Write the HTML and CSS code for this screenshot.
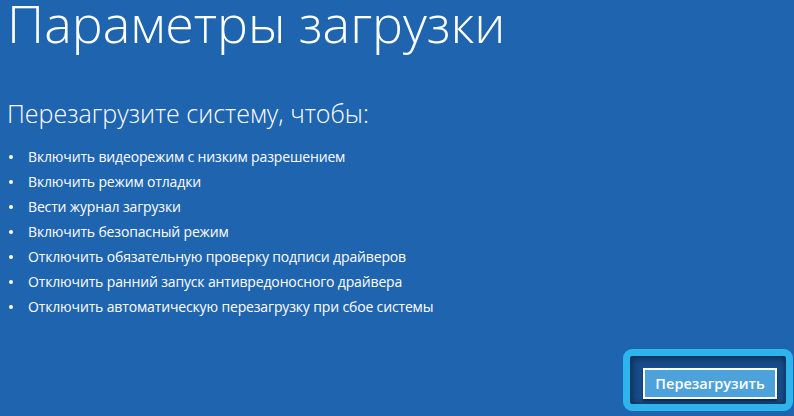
FILE: index.html
```html
<!DOCTYPE html>
<html lang="ru">
<head>
<meta charset="utf-8">
<title>Параметры загрузки</title>
<link rel="stylesheet" href="styles.css">
</head>
<body>
<div class="page">
  <h1 class="title">Параметры загрузки</h1>
  <h2 class="subtitle">Перезагрузите систему, чтобы:</h2>
  <ul class="options">
    <li>Включить видеорежим с низким разрешением</li>
    <li>Включить режим отладки</li>
    <li>Вести журнал загрузки</li>
    <li>Включить безопасный режим</li>
    <li>Отключить обязательную проверку подписи драйверов</li>
    <li>Отключить ранний запуск антивредоносного драйвера</li>
    <li>Отключить автоматическую перезагрузку при сбое системы</li>
  </ul>
  <div class="footer">
    <div class="focus-frame">
      <button class="restart">Перезагрузить</button>
    </div>
  </div>
</div>
</body>
</html>
```
FILE: styles.css
```css
html, body {
  margin: 0;
  padding: 0;
  background: #1f64af;
}
body {
  font-family: "Open Sans", "Noto Sans", sans-serif;
  color: #ffffff;
}
.page {
  box-sizing: border-box;
  height: 416px;
  padding: 0 1px 5px 7px;
  display: flex;
  flex-direction: column;
}
.title {
  margin: 0;
  font-weight: 300;
  font-size: 52px;
  line-height: 46px;
  white-space: nowrap;
}
.subtitle {
  margin: 53px 0 0 0;
  font-weight: 300;
  font-size: 25px;
  line-height: 28px;
  white-space: nowrap;
}
.options {
  list-style: none;
  margin: 17px 0 0 0;
  padding: 0;
  font-size: 14px;
  letter-spacing: -0.15px;
  font-weight: 400;
}
.options li {
  height: 25px;
  line-height: 25px;
  display: flex;
  align-items: center;
  white-space: nowrap;
}
.options li::before {
  content: "";
  width: 4px;
  height: 4px;
  background: #ffffff;
  border-radius: 50%;
  margin: 0 15px 0 2px;
  flex: none;
}
.footer {
  margin-top: auto;
  display: flex;
  justify-content: flex-end;
}
.focus-frame {
  box-sizing: border-box;
  width: 170px;
  height: 62px;
  border: 7px solid #2db4ec;
  border-radius: 9px;
  background: #174c8a;
  box-shadow: inset 3px 3px 6px rgba(0, 0, 0, 0.35), inset -2px -2px 4px rgba(0, 0, 0, 0.25);
  padding: 12px 8px 5px 13px;
  display: flex;
}
.restart {
  box-sizing: border-box;
  width: 134px;
  height: 31px;
  border: 2px solid #ffffff;
  background: #4ea2dc;
  color: #ffffff;
  font-family: "Open Sans", "Noto Sans", sans-serif;
  font-weight: 600;
  font-size: 14.5px;
  padding: 0;
  box-shadow: 0 2px 2px rgba(0, 0, 0, 0.45);
}
```
